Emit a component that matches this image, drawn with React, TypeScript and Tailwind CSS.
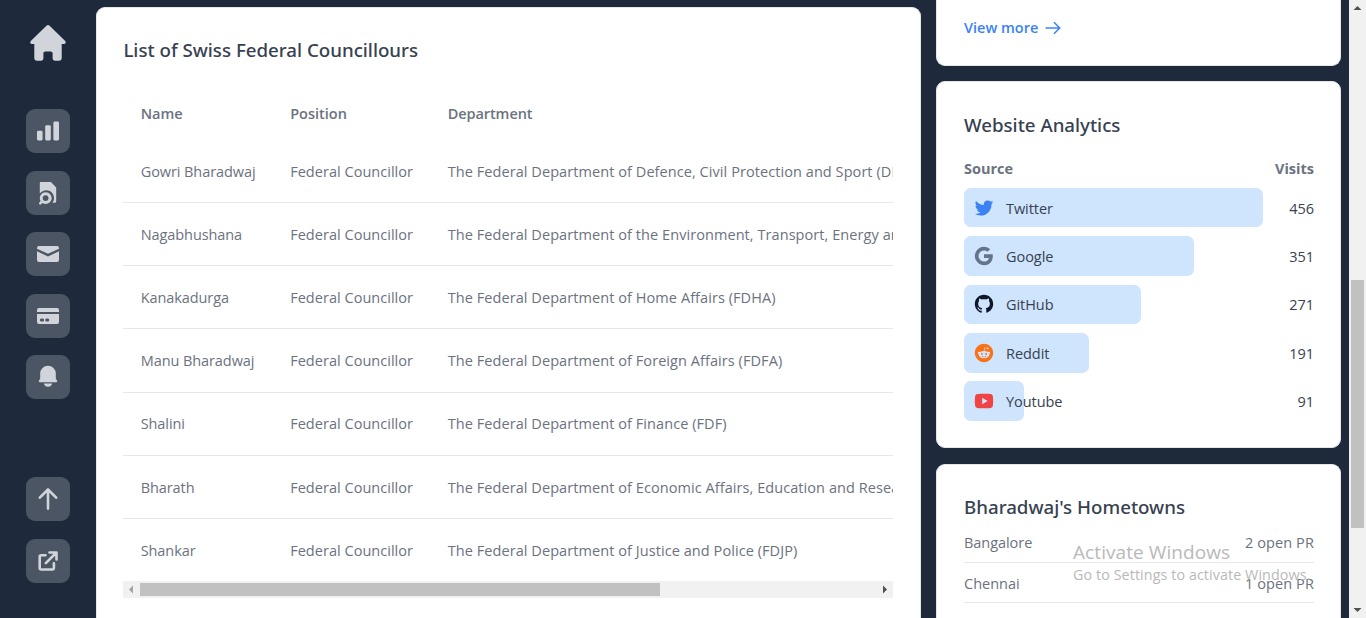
import type { ReactNode } from "react";
import { RiGithubFill, RiGoogleFill, RiRedditFill, RiTwitterFill, RiYoutubeFill } from "react-icons/ri";

const councillors = [
  ["Gowri Bharadwaj", "The Federal Department of Defence, Civil Protection and Sport (DDPS)"],
  ["Nagabhushana", "The Federal Department of the Environment, Transport, Energy and Communications (DETEC)"],
  ["Kanakadurga", "The Federal Department of Home Affairs (FDHA)"],
  ["Manu Bharadwaj", "The Federal Department of Foreign Affairs (FDFA)"],
  ["Shalini", "The Federal Department of Finance (FDF)"],
  ["Bharath", "The Federal Department of Economic Affairs, Education and Research (EAER)"],
  ["Shankar", "The Federal Department of Justice and Police (FDJP)"],
];

const sources = [
  { name: "Twitter", visits: 456, icon: <RiTwitterFill className="size-[22px] text-[#3b82f6]" /> },
  { name: "Google", visits: 351, icon: <RiGoogleFill className="size-[22px] text-[#64748b]" /> },
  { name: "GitHub", visits: 271, icon: <RiGithubFill className="size-[22px] text-[#0f172a]" /> },
  { name: "Reddit", visits: 191, icon: <RiRedditFill className="size-[22px] text-[#f97316]" /> },
  { name: "Youtube", visits: 91, icon: <RiYoutubeFill className="size-[22px] text-[#ef4444]" /> },
];

function Tile({ children }: { children: ReactNode }) {
  return (
    <button className="flex size-11 shrink-0 items-center justify-center rounded-[9px] bg-[#4b5563] text-[#d1d5db]">
      <svg viewBox="0 0 26 26" className="size-[26px]" fill="currentColor">
        {children}
      </svg>
    </button>
  );
}

function CardTitle({ children }: { children: ReactNode }) {
  return (
    <h2 className="h-[31px] font-['Noto_Sans','Open_Sans',sans-serif] text-[18.7px] leading-[31px] font-medium text-[#374151]">{children}</h2>
  );
}

function Sidebar() {
  return (
    <nav className="flex w-24 shrink-0 flex-col items-center justify-between pt-6 pb-[35px]">
      <div className="flex flex-col items-center gap-[17.6px]">
        <svg viewBox="0 0 38 38" className="mb-[29.4px] size-[38px] text-[#d1d5db]" fill="currentColor">
          <path d="M17.4 1.8a2.3 2.3 0 0 1 3.2 0L36.2 17c1.1 1.1.4 3-1.2 3h-2.3v14.3a2.4 2.4 0 0 1-2.4 2.4h-4.6a2.1 2.1 0 0 1-2.1-2.1v-5.3a1.8 1.8 0 0 0-1.8-1.8h-5.6a1.8 1.8 0 0 0-1.8 1.8v5.3a2.1 2.1 0 0 1-2.1 2.1H7.7a2.4 2.4 0 0 1-2.4-2.4V20H3c-1.6 0-2.3-1.9-1.2-3z" />
        </svg>
        <Tile>
          <rect x="2" y="12.8" width="5.6" height="9.6" rx="1.3" />
          <rect x="10.2" y="7.3" width="5.6" height="15.1" rx="1.3" />
          <rect x="18.4" y="3.6" width="5.6" height="18.8" rx="1.3" />
        </Tile>
        <Tile>
          <path d="M5.8 2h10.1l5.3 5.4v13.8a1.6 1.6 0 0 1-1.6 1.6h-2.1c1-1.4 1.5-3 1.5-4.7 0-4.3-3.4-7.8-7.6-7.8-2.7 0-5.1 1.3-6.6 3.3V3a1 1 0 0 1 1-1z" />
          <path fillRule="evenodd" d="M10.6 12.2a5.9 5.9 0 1 1-3 10.9l-1.5 1.2a1.2 1.2 0 0 1-1.7-1.7l1.2-1.5a5.9 5.9 0 0 1 5-8.9zm0 3a2.9 2.9 0 1 0 0 5.8 2.9 2.9 0 0 0 0-5.8z" />
        </Tile>
        <Tile>
          <path d="M4 5h18a2 2 0 0 1 2 2v.7l-11 5.1L2 7.7V7a2 2 0 0 1 2-2z" />
          <path d="M2 10.3l11 5.2 11-5.2V19a2 2 0 0 1-2 2H4a2 2 0 0 1-2-2z" />
        </Tile>
        <Tile>
          <path d="M4 5h18a2 2 0 0 1 2 2v1.9H2V7a2 2 0 0 1 2-2z" />
          <path fillRule="evenodd" d="M2 11h22v8a2 2 0 0 1-2 2H4a2 2 0 0 1-2-2zm4.4 4.500a1.500 1.500 0 1 0 0 3h1.200a1.500 1.500 0 1 0 0-3zm5.300 0a1.500 1.500 0 1 0 0 3h1.100a1.500 1.500 0 1 0 0-3z" />
        </Tile>
        <Tile>
          <path d="M13 1.800a7.800 7.800 0 0 1 7.800 7.800v4.800l1.300 2.400a1 1 0 0 1-.9 1.500H4.800a1 1 0 0 1-.9-1.500l1.300-2.400V9.600A7.800 7.800 0 0 1 13 1.800z" />
          <path d="M8.900 19.500h8.200a4.200 4.200 0 0 1-8.200 0z" />
        </Tile>
      </div>
      <div className="flex flex-col gap-[17.6px]">
        <Tile>
          <path d="M13 22.600V3.500M4.800 11.700 13 3.500l8.200 8.200" fill="none" stroke="currentColor" strokeWidth="2.600" strokeLinecap="round" strokeLinejoin="round" />
        </Tile>
        <Tile>
          <path d="M10.500 7.200H6.200a1.500 1.500 0 0 0-1.500 1.500V20a1.500 1.500 0 0 0 1.500 1.500h11.200a1.500 1.500 0 0 0 1.500-1.500v-4.700M14.500 4.500h7v7M21 5 10.800 15.200" fill="none" stroke="currentColor" strokeWidth="2.600" strokeLinecap="round" strokeLinejoin="round" />
        </Tile>
      </div>
    </nav>
  );
}

function CouncillorsCard() {
  return (
    <main className="flex w-[825px] shrink-0 flex-col">
      <section className="mt-[7px] flex flex-1 flex-col rounded-t-[9px] border border-b-0 border-gray-200 bg-white px-[26.4px] pt-[26px]">
        <CardTitle>List of Swiss Federal Councillours</CardTitle>
        <div className="mt-[23px] w-[770px] overflow-hidden">
          <div className="w-[1100px]">
            <div className="flex h-[51.9px] items-center pl-[17.300px] font-semibold">
              <span className="w-[149.500px]">Name</span>
              <span className="w-[157.500px]">Position</span>
              <span className="tracking-[-0.08px]">Department</span>
            </div>
            <div className="divide-y divide-gray-200">
              {councillors.map(([name, department]) => (
                <div key={name} className="flex h-[63.200px] items-center pt-[1.2px] pl-[17.300px] whitespace-nowrap">
                  <span className="w-[149.500px] tracking-[-0.08px]">{name}</span>
                  <span className="w-[157.500px] tracking-[0.03px]">Federal Councillor</span>
                  <span className="tracking-[0.07px]">{department}</span>
                </div>
              ))}
            </div>
          </div>
        </div>
        <div className="-mt-[1.4px] flex h-[17px] w-[770px] shrink-0 items-center bg-[#f1f1f1]">
          <svg viewBox="0 0 17 17" className="size-[17px]" fill="#a3a3a3"><path d="M10 4.500v8L6 8.500z" /></svg>
          <div className="h-[13px] w-[520px] bg-[#c1c1c1]" />
          <svg viewBox="0 0 17 17" className="ml-auto size-[17px]" fill="#505050"><path d="M7 4.500v8l4-4z" /></svg>
        </div>
      </section>
    </main>
  );
}

function AnalyticsCard() {
  return (
    <section className="h-[367px] shrink-0 rounded-[9px] border border-gray-200 bg-white pt-[27px] pr-[26px] pl-[27px]">
      <CardTitle>Website Analytics</CardTitle>
      <div className="mt-[18px] flex h-[22px] items-center justify-between font-bold">
        <span>Source</span>
        <span>Visits</span>
      </div>
      <div className="mt-[7.800px] flex flex-col gap-[8.800px] text-[#374151]">
        {sources.map((s) => (
          <div key={s.name} className="flex h-[39.600px] items-center justify-between">
            <div className="h-full w-[298.500px]">
              <div className="flex h-full items-center rounded-[6.600px] bg-[#cfe4fd] pl-[9px]" style={{ width: `${(s.visits / 456) * 100}%` }}>
                <span className="shrink-0">{s.icon}</span>
                <span className="ml-[11px] pt-[1.8px] tracking-[-0.050px] whitespace-nowrap">{s.name}</span>
              </div>
            </div>
            <span className="pt-[1.8px]">{s.visits}</span>
          </div>
        ))}
      </div>
    </section>
  );
}

function HometownsCard() {
  return (
    <section className="flex-1 rounded-t-[9px] border border-b-0 border-gray-200 bg-white pt-[26px] pr-[26px] pl-[27px]">
      <CardTitle>Bharadwaj's Hometowns</CardTitle>
      <div className="flex h-[41px] items-center justify-between border-b border-gray-200 pt-[2px]">
        <span className="tracking-[-0.050px]">Bangalore</span>
        <span className="tracking-[0.100px]">2 open PR</span>
      </div>
      <div className="flex h-[40px] items-center justify-between border-b border-gray-200 pt-[3px]">
        <span>Chennai</span>
        <span className="tracking-[0.100px]">1 open PR</span>
      </div>
    </section>
  );
}

function PageScrollbar() {
  return (
    <div className="flex w-[17px] shrink-0 flex-col items-center bg-[#f1f1f1]">
      <svg viewBox="0 0 17 17" className="size-[17px]" fill="#505050"><path d="M4.500 10h8l-4-4z" /></svg>
      <div className="mt-[263px] h-[248px] w-[13px] bg-[#c1c1c1]" />
      <svg viewBox="0 0 17 17" className="mt-auto size-[17px]" fill="#505050"><path d="M4.500 7h8l-4 4z" /></svg>
    </div>
  );
}

export default function App() {
  return (
    <div className="relative flex h-[618px] w-[1366px] overflow-hidden bg-[#1e293b] font-['Open_Sans','Noto_Sans',sans-serif] text-[14.500px] text-[#6b7280]">
      <Sidebar />
      <CouncillorsCard />
      <aside className="ml-[15px] flex w-[405px] shrink-0 flex-col">
        <section className="flex h-[66px] shrink-0 items-start rounded-b-[9px] border border-t-0 border-gray-200 bg-white px-[27px] pt-[17px]">
          <a className="flex h-[22px] items-center gap-[7px] font-semibold text-[#3b82f6]">
            View more
            <svg viewBox="0 0 16 14" className="h-[14px] w-[16px]" fill="none" stroke="currentColor" strokeWidth="1.500">
              <path d="M.5 7h14M9 1.200 14.700 7 9 12.800" />
            </svg>
          </a>
        </section>
        <div className="h-[15px] shrink-0" />
        <AnalyticsCard />
        <div className="h-[16px] shrink-0" />
        <HometownsCard />
      </aside>
      <div className="flex-1" />
      <PageScrollbar />
      <div className="pointer-events-none absolute top-[539px] left-[1073px] whitespace-nowrap text-[#b9b9b9]">
        <p className="text-[19px] leading-[26px] tracking-[0.080px]">Activate Windows</p>
        <p className="text-[14.300px] leading-[20px] tracking-[0.090px]">Go to Settings to activate Windows.</p>
      </div>
    </div>
  );
}
